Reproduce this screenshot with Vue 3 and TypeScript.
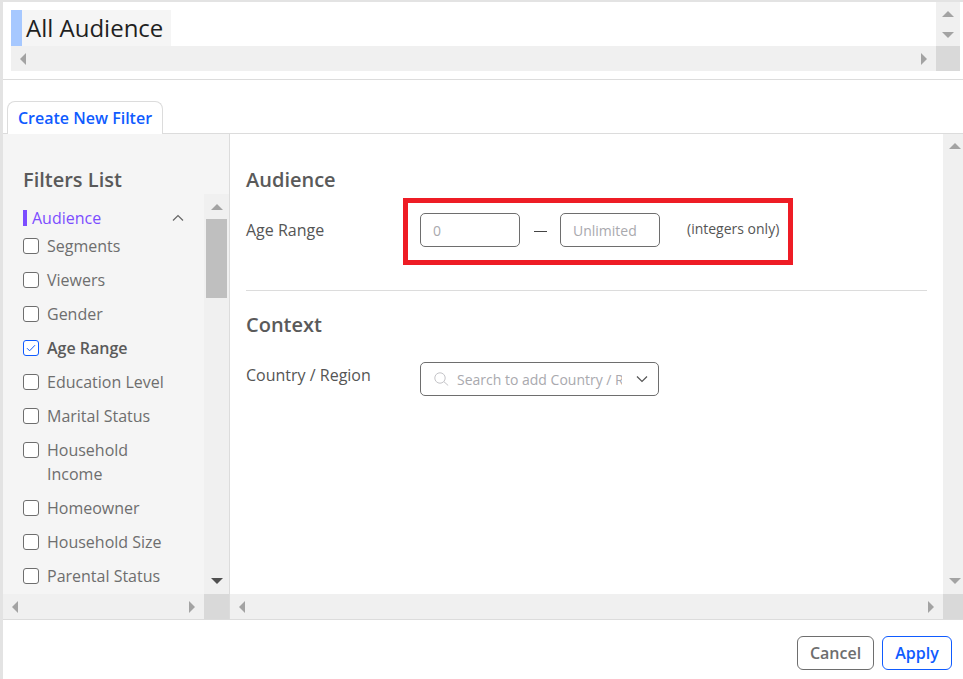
<template>
  <div class="page">
    <header class="title-box">
      <div class="title-top">
        <div class="title-view">
          <div class="title-chip"><span class="chip-mark"></span><span class="chip-text">All Audience</span></div>
        </div>
        <div class="vbar vbar-title">
          <span class="arrow up"></span>
          <span class="arrow down"></span>
        </div>
      </div>
      <div class="title-bottom">
        <div class="hbar"><span class="arrow left"></span><span class="arrow right"></span></div>
        <div class="corner corner-title"></div>
      </div>
    </header>

    <div class="tabs">
      <div class="tab">Create New Filter</div>
    </div>

    <div class="body">
      <aside class="side">
        <div class="side-main">
          <h2 class="side-title">Filters List</h2>
          <div class="side-list">
            <div class="list-view">
              <div class="group">
                <span class="group-mark"></span>
                <span class="group-name">Audience</span>
                <svg class="group-chevron" width="12" height="8" viewBox="0 0 12 8">
                  <path d="M1 6.5 6 1.5l5 5" fill="none" stroke="#666" stroke-width="1.2" />
                </svg>
              </div>
              <label v-for="item in filters" :key="item.name" class="row" :class="{ on: item.checked }">
                <span class="box">
                  <svg v-if="item.checked" width="10" height="8" viewBox="0 0 10 8">
                    <path d="M1 4.2 3.6 6.8 9 1.2" fill="none" stroke="#0f5bff" stroke-width="1" />
                  </svg>
                </span>
                <span class="row-name">{{ item.name }}</span>
              </label>
            </div>
            <div class="vbar vbar-list">
              <span class="arrow up"></span>
              <span class="thumb"></span>
              <span class="arrow down dark"></span>
            </div>
          </div>
        </div>
        <div class="side-bottom">
          <div class="hbar"><span class="arrow left"></span><span class="arrow right"></span></div>
          <div class="corner corner-list"></div>
        </div>
      </aside>

      <main class="main">
        <div class="main-top">
          <div class="content">
            <section class="section first">
              <h3 class="section-title">Audience</h3>
              <div class="field">
                <span class="field-label">Age Range</span>
                <div class="highlight">
                  <div class="input"><span class="placeholder">0</span></div>
                  <span class="dash"></span>
                  <div class="input"><span class="placeholder">Unlimited</span></div>
                  <span class="hint">(integers only)</span>
                </div>
              </div>
            </section>
            <section class="section second">
              <h3 class="section-title">Context</h3>
              <div class="field">
                <span class="field-label">Country / Region</span>
                <div class="select">
                  <svg class="search" width="15" height="14" viewBox="0 0 15 14">
                    <circle cx="6" cy="6" r="5.2" fill="none" stroke="#c4c4c8" stroke-width="1" />
                    <path d="m9.8 9.6 4.4 3.9" fill="none" stroke="#c4c4c8" stroke-width="1" />
                  </svg>
                  <span class="select-text">Search to add Country / Region</span>
                  <svg class="chevron" width="12" height="8" viewBox="0 0 12 8">
                    <path d="M1 1.5 6 6.5l5-5" fill="none" stroke="#555" stroke-width="1.2" />
                  </svg>
                </div>
              </div>
            </section>
          </div>
          <div class="vbar vbar-main">
            <span class="arrow up"></span>
            <span class="arrow down"></span>
          </div>
        </div>
        <div class="main-bottom">
          <div class="hbar"><span class="arrow left"></span><span class="arrow right"></span></div>
          <div class="corner corner-main"></div>
        </div>
      </main>
    </div>

    <footer class="footer">
      <button class="btn" type="button">Cancel</button>
      <button class="btn primary" type="button">Apply</button>
    </footer>
  </div>
</template>

<script setup lang="ts">
interface FilterItem {
  name: string
  checked?: boolean
}

const filters: FilterItem[] = [
  { name: 'Segments' },
  { name: 'Viewers' },
  { name: 'Gender' },
  { name: 'Age Range', checked: true },
  { name: 'Education Level' },
  { name: 'Marital Status' },
  { name: 'Household Income' },
  { name: 'Homeowner' },
  { name: 'Household Size' },
  { name: 'Parental Status' }
]
</script>

<style>
html,
body {
  margin: 0;
  background: #fff;
}
</style>

<style scoped>
* {
  box-sizing: border-box;
}

.page {
  width: 963px;
  height: 679px;
  display: flex;
  flex-direction: column;
  overflow: hidden;
  border-top: 2px solid #e3e3e3;
  border-left: 3px solid #e3e3e3;
  font-family: "Open Sans", "Liberation Sans", sans-serif;
  color: #555;
}

/* title box */
.title-box {
  height: 78px;
  flex: none;
  padding: 0 3px 8px 8px;
  border-bottom: 1px solid #dcdcdc;
  display: flex;
  flex-direction: column;
}

.title-top {
  display: flex;
  height: 44px;
}

.title-view {
  flex: 1;
  padding-top: 8px;
}

.title-chip {
  width: 160px;
  height: 36px;
  display: flex;
  background: #f5f5f5;
}

.chip-mark {
  width: 11px;
  background: #a6c8ff;
}

.chip-text {
  padding-left: 4px;
  font-size: 24px;
  line-height: 36px;
  color: #1f1f1f;
}

.title-bottom,
.side-bottom,
.main-bottom {
  display: flex;
  height: 25px;
  flex: none;
}

.vbar {
  flex: none;
  background: #f0f0f0;
  display: flex;
  flex-direction: column;
  align-items: center;
}

.vbar-title {
  width: 24px;
  padding-top: 9px;
  gap: 15px;
}

.vbar-list {
  width: 25px;
  padding: 10px 0 10px;
}

.vbar-main {
  width: 20px;
  justify-content: space-between;
  padding: 9px 0 10px 4px;
}

.hbar {
  flex: 1;
  background: #f0f0f0;
  display: flex;
  align-items: center;
  justify-content: space-between;
  padding: 0 9px;
}

.corner {
  flex: none;
  background: #d9d9d9;
}

.corner-title {
  width: 24px;
}

.corner-list {
  width: 25px;
}

.corner-main {
  width: 20px;
}

.thumb {
  width: 21px;
  height: 79px;
  margin-top: 9px;
  background: #bfbfbf;
  margin-bottom: auto;
}

.arrow {
  display: block;
  width: 0;
  height: 0;
  flex: none;
}

.arrow.up {
  border-left: 6px solid transparent;
  border-right: 6px solid transparent;
  border-bottom: 6px solid #a3a3a3;
}

.arrow.down {
  border-left: 6px solid transparent;
  border-right: 6px solid transparent;
  border-top: 6px solid #a3a3a3;
}

.arrow.down.dark {
  border-top-color: #505050;
}

.arrow.left {
  border-top: 6px solid transparent;
  border-bottom: 6px solid transparent;
  border-right: 6px solid #a3a3a3;
}

.arrow.right {
  border-top: 6px solid transparent;
  border-bottom: 6px solid transparent;
  border-left: 6px solid #a3a3a3;
}

/* tabs */
.tabs {
  height: 54px;
  flex: none;
  padding: 21px 0 0 4px;
  border-bottom: 1px solid #dcdcdc;
  display: flex;
}

.tab {
  width: 156px;
  height: 33px;
  border: 1px solid #dcdcdc;
  border-bottom: none;
  border-radius: 8px 8px 0 0;
  background: #fff;
  text-align: center;
  font-size: 16px;
  font-weight: 600;
  line-height: 32px;
  color: #0f5bff;
}

/* body */
.body {
  height: 486px;
  flex: none;
  display: flex;
  border-bottom: 1px solid #dcdcdc;
}

.side {
  width: 227px;
  flex: none;
  display: flex;
  flex-direction: column;
  background: #f5f5f5;
  border-right: 1px solid #dcdcdc;
}

.side-main {
  flex: 1;
  min-height: 0;
  display: flex;
  flex-direction: column;
}

.side-title {
  margin: 0;
  height: 60px;
  flex: none;
  padding: 32px 0 0 20px;
  font-size: 20px;
  line-height: 28px;
  font-weight: 600;
  color: #5a5a5a;
}

.side-list {
  flex: 1;
  min-height: 0;
  display: flex;
}

.list-view {
  flex: 1;
  overflow: hidden;
  padding: 12px 0 0 20px;
}

.group {
  height: 24px;
  margin-bottom: -1px;
  display: flex;
  align-items: center;
  font-size: 16px;
  color: #7c4dff;
}

.group-mark {
  width: 4px;
  height: 16px;
  margin-right: 5px;
  background: #7c4dff;
}

.group-chevron {
  margin-left: auto;
  margin-right: 20px;
}

.row {
  display: flex;
  align-items: flex-start;
  padding: 5px 0;
  font-size: 16px;
  line-height: 24px;
  color: #6e6e6e;
}

.row.on {
  font-weight: 600;
  color: #5a5a5a;
}

.box {
  width: 16px;
  height: 16px;
  margin: 4px 8px 0 0;
  flex: none;
  border: 1px solid #6e6e6e;
  border-radius: 3px;
  background: #fff;
  display: flex;
  align-items: center;
  justify-content: center;
}

.row.on .box {
  border-color: #0f5bff;
}

.row-name {
  width: 130px;
}

/* main */
.main {
  flex: 1;
  min-width: 0;
  display: flex;
  flex-direction: column;
}

.main-top {
  flex: 1;
  min-height: 0;
  display: flex;
}

.content {
  flex: 1;
  padding: 0 16px;
}

.section-title {
  margin: 0;
  font-size: 20px;
  line-height: 28px;
  font-weight: 600;
  color: #5a5a5a;
}

.section.first {
  height: 157px;
  padding-top: 32px;
  border-bottom: 1px solid #dcdcdc;
}

.section.second {
  padding-top: 20px;
}

.field {
  display: flex;
  align-items: flex-start;
}

.first .field {
  margin-top: 4px;
}

.second .field {
  margin-top: 23px;
}

.field-label {
  width: 174px;
  flex: none;
  font-size: 16px;
  line-height: 24px;
  color: #555;
}

.first .field-label {
  margin-top: 20px;
}

.second .field-label {
  margin-top: 1px;
}

.highlight {
  width: 390px;
  height: 67px;
  margin-left: -17px;
  flex: none;
  border: 5px solid #ee1c25;
  display: flex;
  align-items: center;
  padding: 0 0 3px 12px;
}

.input {
  width: 100px;
  height: 34px;
  border: 1px solid #6e6e6e;
  border-radius: 5px;
  padding-left: 12px;
  display: flex;
  align-items: center;
}

.placeholder {
  font-size: 14px;
  color: #a9a9ae;
}

.dash {
  width: 13px;
  height: 1px;
  margin: 2px 13px 0 14px;
  background: #444;
}

.hint {
  margin: -4px 0 0 27px;
  font-size: 14px;
  color: #555;
  white-space: nowrap;
}

.select {
  width: 239px;
  height: 34px;
  border: 1px solid #6e6e6e;
  border-radius: 5px;
  display: flex;
  align-items: center;
  padding-left: 13px;
}

.search {
  flex: none;
}

.select-text {
  width: 165px;
  margin-left: 8px;
  overflow: hidden;
  white-space: nowrap;
  font-size: 14px;
  color: #a9a9ae;
}

.chevron {
  margin-left: 14px;
}

/* footer */
.footer {
  flex: 1;
  display: flex;
  justify-content: flex-end;
  align-items: flex-start;
  gap: 8px;
  padding: 16px 11px 0 0;
}

.btn {
  height: 34px;
  width: 77px;
  padding: 0;
  border: 1px solid #6e6e6e;
  border-radius: 6px;
  background: #fff;
  font-family: inherit;
  font-size: 16px;
  font-weight: 600;
  color: #6e6e6e;
}

.btn.primary {
  width: 70px;
  border-color: #0f5bff;
  color: #0f5bff;
}
</style>
